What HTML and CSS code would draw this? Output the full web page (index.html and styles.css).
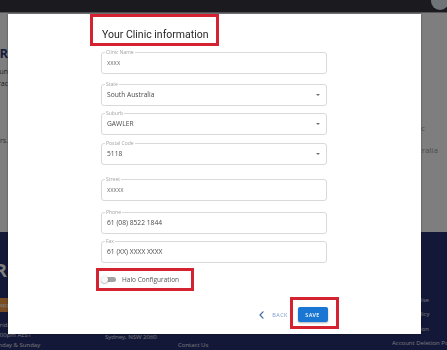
FILE: index.html
```html
<!DOCTYPE html>
<html lang="en">
<head>
<meta charset="utf-8">
<title>Your Clinic information</title>
<link rel="stylesheet" href="styles.css">
</head>
<body>
<div class="page">
  <header class="topbar">
    <span class="avatar"></span>
  </header>
  <main class="content">
    <div class="content-left">
      <h1 class="page-title">DOCTOR</h1>
      <p class="page-text first">Find and run</p>
      <p class="page-text">Manage your prac</p>
      <p class="page-text gap">Members.</p>
    </div>
    <div class="content-right">
      <p class="card-line">Clinic</p>
      <p class="card-line">Australia</p>
    </div>
  </main>
  <footer class="footer">
    <div class="foot-brand">
      <p class="foot-logo">DOCTOR</p>
      <span class="foot-btn">Book an appointment</span>
      <p class="foot-line first">Monday - Friday</p>
      <p class="foot-line">9:00am - 5:00pm AEST</p>
      <p class="foot-line">Closed Monday &amp; Sunday</p>
    </div>
    <div class="foot-address">
      <p>Head Office</p>
      <p>Level 5, 1 Market St</p>
      <p>Sydney, NSW 2060</p>
    </div>
    <div class="foot-links">
      <p>Home</p>
      <p>About Us</p>
      <p>Find a Clinic</p>
      <p>Contact Us</p>
    </div>
    <div class="foot-legal">
      <p>Terms of Use</p>
      <p>Privacy Policy</p>
      <p>Accreditation</p>
      <p>Account Deletion Policy</p>
    </div>
  </footer>
</div>
<div class="overlay"></div>
<div class="modal" role="dialog">
  <div class="form">
    <h2 class="title-box">Your Clinic information</h2>
    <div class="field f-clinic"><span class="label">Clinic Name</span><span class="value light">xxxx</span></div>
    <div class="field f-state"><span class="label">State</span><span class="value">South Australia</span><span class="arrow"></span></div>
    <div class="field f-suburb"><span class="label">Suburb</span><span class="value">GAWLER</span><span class="arrow"></span></div>
    <div class="field f-postal"><span class="label">Postal Code</span><span class="value">5118</span><span class="arrow"></span></div>
    <div class="field f-street"><span class="label">Street</span><span class="value light">xxxxx</span></div>
    <div class="field f-phone"><span class="label">Phone</span><span class="value">61 (08) 8522 1844</span></div>
    <div class="field f-fax"><span class="label">Fax</span><span class="value">61 (XX) XXXX XXXX</span></div>
    <div class="halo-box">
      <span class="switch"><span class="thumb"></span></span>
      <span class="halo-text">Halo Configuration</span>
    </div>
    <div class="actions">
      <button class="back" type="button">
        <svg class="chev" width="5" height="8" viewBox="0 0 5 8"><path d="M4 0.8 L1 4 L4 7.2" fill="none" stroke="#3f6aa8" stroke-width="1.2" stroke-linecap="round" stroke-linejoin="round"/></svg>
        <span>BACK</span>
      </button>
      <div class="save-box"><button class="save" type="button">SAVE</button></div>
    </div>
  </div>
</div>
</body>
</html>
```

FILE: styles.css
```css
* { box-sizing: border-box; }
html, body { margin: 0; padding: 0; overflow: hidden; }
body {
  width: 447px;
  height: 350px;
  position: relative;
  font-family: "Open Sans", "Liberation Sans", sans-serif;
  background: #ffffff;
}
p { margin: 0; }

.page { height: 350px; display: flex; flex-direction: column; }

.topbar {
  height: 13px;
  flex: none;
  background: #36363f;
  border-bottom: 1px solid #a8a8b0;
  display: flex;
  justify-content: flex-end;
  align-items: flex-start;
}
.avatar {
  width: 18px;
  height: 18px;
  border-radius: 50%;
  background: #dfe8f3;
  margin: -8px -2px 0 0;
}

.content {
  flex: 1;
  display: flex;
  justify-content: space-between;
  background: #fdfdfd;
}
.content-left {
  width: 8px;
  display: flex;
  flex-direction: column;
  align-items: flex-end;
  padding-top: 31px;
}
.page-title {
  margin: 0;
  font-size: 13px;
  font-weight: 700;
  line-height: 18px;
  color: #2a3a78;
  white-space: nowrap;
}
.page-text { font-size: 7px; line-height: 12px; color: #444; white-space: nowrap; }
.page-text.first { margin-top: 4px; }
.page-text.gap { margin-top: 45px; color: #666; }
.content-right { width: 42px; padding-top: 110px; }
.card-line { font-size: 8px; line-height: 10px; color: #9a9a9a; white-space: nowrap; }
.card-line + .card-line { margin-top: 12px; }

.footer {
  height: 118px;
  flex: none;
  margin-left: -31px;
  background: #263070;
  color: #e6e8f0;
  font-size: 6px;
  display: grid;
  grid-template-columns: 136px 73px 214px 1fr;
}
.footer p { white-space: nowrap; }
.foot-brand {
  width: 38px;
  display: flex;
  flex-direction: column;
  align-items: flex-start;
  padding-top: 28px;
}
.foot-logo {
  align-self: flex-end;
  font-size: 18px;
  font-weight: 700;
  line-height: 20px;
  color: #ffffff;
}
.foot-btn {
  margin-top: 18px;
  height: 14px;
  padding: 0 6px;
  display: flex;
  align-items: center;
  background: #f39a44;
  color: #fff;
  white-space: nowrap;
  border-radius: 2px;
}
.foot-line { line-height: 10px; }
.foot-line.first { margin-top: 8px; }
.foot-address { padding-top: 80px; line-height: 10px; }
.foot-links { padding-top: 64px; line-height: 14px; }
.foot-legal { padding-top: 61px; line-height: 14.3px; }

.overlay {
  position: fixed;
  inset: 0;
  background: rgba(0, 0, 0, 0.5);
}

.modal {
  position: absolute;
  left: 8px;
  top: 14px;
  width: 413px;
  height: 320px;
  background: #ffffff;
  box-shadow: 0 0 2px rgba(0, 0, 0, 0.4);
}
.form {
  margin-left: 93px;
  width: 226px;
  display: flex;
  flex-direction: column;
}
.title-box {
  margin: 0 0 0 -11px;
  width: 129px;
  height: 32px;
  border: 3px solid #d42230;
  padding: 11.5px 0 0 9px;
  font-family: Roboto, "Liberation Sans", sans-serif;
  font-weight: 400;
  font-size: 10.5px;
  line-height: 12px;
  color: #262626;
  white-space: nowrap;
}

.field {
  position: relative;
  flex: none;
  height: 22px;
  border: 1px solid #d9d9d9;
  border-radius: 3px;
  display: flex;
  align-items: center;
  padding: 0 6px 0 5px;
}
.f-clinic { margin-top: 6px; }
.f-state { margin-top: 10px; }
.f-suburb { margin-top: 7px; }
.f-postal { margin-top: 8px; }
.f-street { margin-top: 14px; }
.f-phone { margin-top: 11px; }
.f-fax { margin-top: 7px; }

.label {
  position: absolute;
  left: 3px;
  top: -4px;
  padding: 0 1px;
  background: #ffffff;
  font-size: 5px;
  line-height: 6px;
  color: #a3a3a3;
  white-space: nowrap;
}
.value {
  font-size: 6.7px;
  line-height: 10px;
  color: #4a4a4a;
  white-space: nowrap;
}
.value.light { color: #7a7a7a; font-size: 6.3px; }
.arrow {
  margin-left: auto;
  width: 0;
  height: 0;
  border-left: 2.2px solid transparent;
  border-right: 2.2px solid transparent;
  border-top: 2.5px solid #707070;
}

.halo-box {
  margin: 5px 0 0 -5px;
  width: 98px;
  height: 23px;
  border: 3px solid #d42230;
  display: flex;
  align-items: center;
  padding-left: 3px;
}
.switch {
  position: relative;
  width: 14px;
  height: 5px;
  border-radius: 3px;
  background: #a3a3a3;
  flex: none;
}
.thumb {
  position: absolute;
  left: -1px;
  top: -1px;
  width: 7px;
  height: 7px;
  border-radius: 50%;
  background: #f7f7f7;
  box-shadow: 0 0.5px 1.5px rgba(0, 0, 0, 0.45);
}
.halo-text {
  margin-left: 6px;
  font-size: 6.5px;
  line-height: 10px;
  color: #555555;
  white-space: nowrap;
}

.actions {
  margin: 6px -11.5px 0 0;
  display: flex;
  justify-content: flex-end;
  align-items: center;
}
.back {
  margin: 4px 1.5px 0 0;
  padding: 0;
  border: none;
  background: none;
  display: flex;
  align-items: center;
  gap: 8px;
  font-family: "Open Sans", "Liberation Sans", sans-serif;
  font-size: 5.5px;
  letter-spacing: 0.5px;
  color: #7d9ad0;
}
.chev { display: block; }
.save-box {
  border: 3px solid #d42230;
  padding: 7px 8px 4px 5px;
  display: flex;
}
.save {
  width: 30px;
  height: 15px;
  padding: 0;
  border: none;
  border-radius: 2px;
  background: #1976d2;
  box-shadow: 0 1px 2px rgba(0, 0, 0, 0.3);
  color: #ffffff;
  font-family: "Open Sans", "Liberation Sans", sans-serif;
  font-size: 5.5px;
  font-weight: 600;
  letter-spacing: 0.3px;
}
```
